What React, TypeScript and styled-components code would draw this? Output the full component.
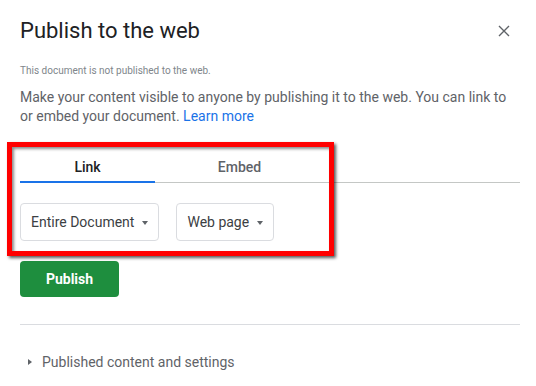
import React, { useState } from 'react'
import styled, { createGlobalStyle } from 'styled-components'

const GlobalStyle = createGlobalStyle`
  body {
    margin: 0;
    background: #ffffff;
    font-family: Roboto, 'Liberation Sans', Arial, sans-serif;
  }
`

const Dialog = styled.div`
  position: relative;
  width: 536px;
  height: 386px;
  box-sizing: border-box;
  padding: 16px 16px 0 20px;
  overflow: hidden;
`

const Header = styled.div`
  display: flex;
  align-items: flex-start;
  justify-content: space-between;
`

const Title = styled.h1`
  margin: 0;
  font-size: 22px;
  line-height: 30px;
  font-weight: 400;
  color: #202124;
`

const CloseButton = styled.button`
  display: flex;
  align-items: center;
  justify-content: center;
  width: 24px;
  height: 24px;
  margin: 3px 4px 0 0;
  padding: 0;
  border: none;
  background: none;
  cursor: pointer;
`

const Status = styled.p`
  margin: 19px 0 0;
  font-size: 10px;
  line-height: 12px;
  color: #80868b;
`

const Intro = styled.p`
  margin: 11px 0 0;
  width: 500px;
  font-size: 14px;
  line-height: 19px;
  color: #5f6368;
`

const LearnMore = styled.a`
  color: #1a73e8;
  text-decoration: none;
`

const Tabs = styled.div`
  display: flex;
  width: 500px;
  margin-top: 27px;
  border-bottom: 1px solid #c4c7c5;
`

const Tab = styled.button<{ $active: boolean; $width: number }>`
  width: ${(p) => p.$width}px;
  height: 30px;
  padding: 0;
  margin-bottom: -1px;
  border: none;
  border-bottom: 2px solid ${(p) => (p.$active ? '#1a73e8' : 'transparent')};
  background: none;
  font-family: inherit;
  font-size: 14px;
  font-weight: 500;
  color: ${(p) => (p.$active ? '#202124' : '#5f6368')};
  cursor: pointer;
`

const SelectRow = styled.div`
  display: flex;
  gap: 17px;
  margin-top: 20px;
`

const Select = styled.button`
  display: flex;
  align-items: center;
  gap: 8px;
  height: 38px;
  box-sizing: border-box;
  padding: 0 10px;
  border: 1px solid #dadce0;
  border-radius: 4px;
  background: #fff;
  font-family: inherit;
  font-size: 14px;
  color: #3c4043;
  cursor: pointer;
`

const Caret = styled.span`
  width: 0;
  height: 0;
  border-left: 3.5px solid transparent;
  border-right: 3.5px solid transparent;
  border-top: 4px solid #5f6368;
  margin-top: 1px;
`

const PublishButton = styled.button`
  margin-top: 20px;
  width: 99px;
  height: 36px;
  border: none;
  border-radius: 4px;
  background: #1e8e3e;
  color: #fff;
  font-family: inherit;
  font-size: 14px;
  font-weight: 700;
  cursor: pointer;
`

const Divider = styled.hr`
  width: 500px;
  margin: 27px 0 0;
  border: none;
  border-top: 1px solid #dadce0;
`

const Expander = styled.div`
  display: flex;
  align-items: center;
  gap: 10px;
  margin-top: 27px;
  padding-left: 8px;
  font-size: 14px;
  line-height: 20px;
  color: #5f6368;
`

const ExpandArrow = styled.span`
  width: 0;
  height: 0;
  border-top: 3.5px solid transparent;
  border-bottom: 3.5px solid transparent;
  border-left: 4px solid #5f6368;
`

const Highlight = styled.div`
  position: absolute;
  left: 7px;
  top: 142px;
  width: 327px;
  height: 114px;
  box-sizing: border-box;
  border: 5px solid #ff0000;
  box-shadow: 2px 2px 3px rgba(0, 0, 0, 0.65), inset 2px 2px 3px rgba(0, 0, 0, 0.45);
  pointer-events: none;
`

export default function App() {
  const [tab, setTab] = useState<'link' | 'embed'>('link')

  return (
    <>
      <GlobalStyle />
      <Dialog>
        <Header>
          <Title>Publish to the web</Title>
          <CloseButton aria-label="Close">
            <svg width="12" height="12" viewBox="0 0 12 12">
              <path d="M1 1L11 11M11 1L1 11" stroke="#5f6368" strokeWidth="1.4" fill="none" />
            </svg>
          </CloseButton>
        </Header>
        <Status>This document is not published to the web.</Status>
        <Intro>
          Make your content visible to anyone by publishing it to the web. You can link to or
          embed your document. <LearnMore href="#">Learn more</LearnMore>
        </Intro>
        <Tabs>
          <Tab $active={tab === 'link'} $width={135} onClick={() => setTab('link')}>
            Link
          </Tab>
          <Tab $active={tab === 'embed'} $width={169} onClick={() => setTab('embed')}>
            Embed
          </Tab>
        </Tabs>
        <SelectRow>
          <Select>
            Entire Document <Caret />
          </Select>
          <Select>
            Web page <Caret />
          </Select>
        </SelectRow>
        <PublishButton>Publish</PublishButton>
        <Divider />
        <Expander>
          <ExpandArrow />
          Published content and settings
        </Expander>
        <Highlight />
      </Dialog>
    </>
  )
}
